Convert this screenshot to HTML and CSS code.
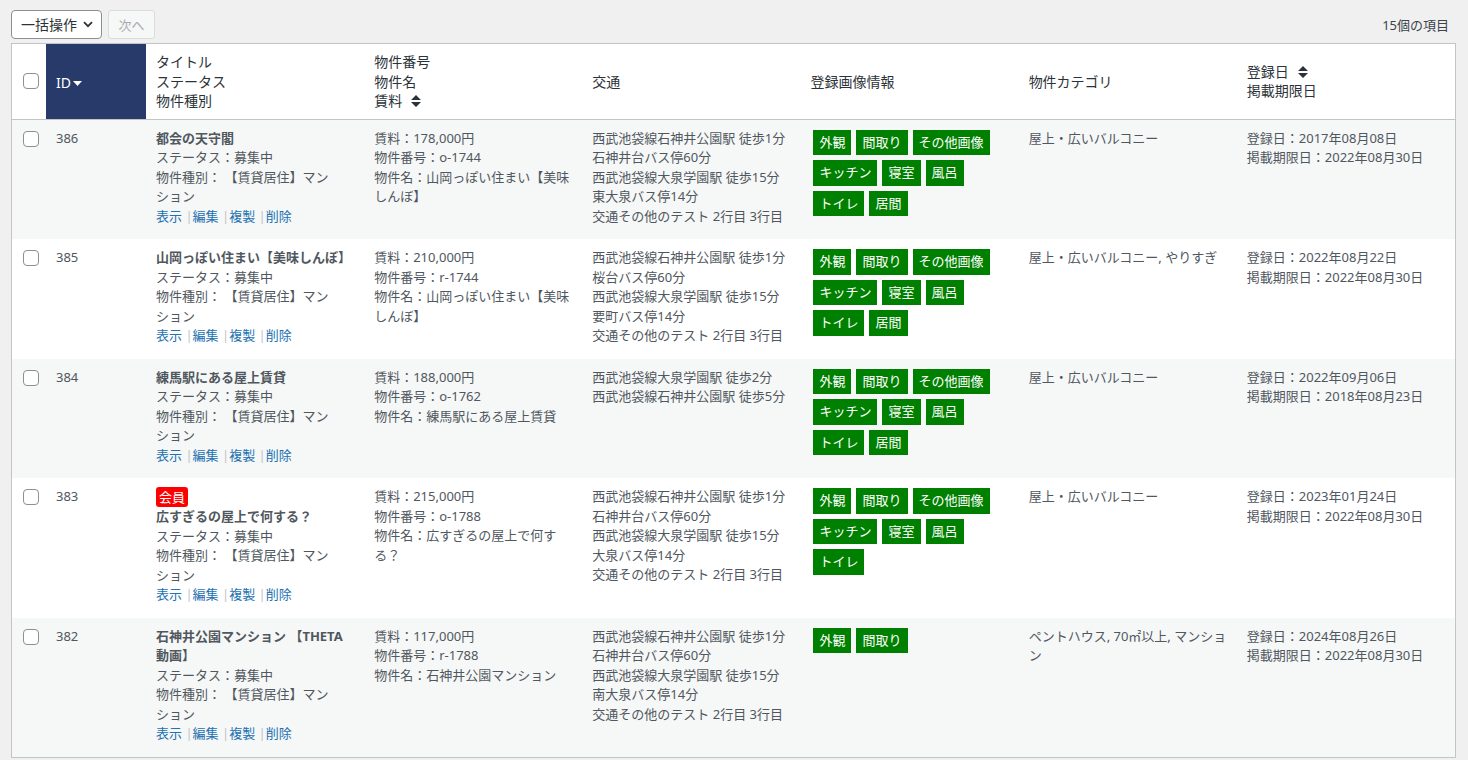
FILE: index.html
```html
<!DOCTYPE html>
<html lang="ja">
<head>
<meta charset="utf-8">
<title>物件一覧</title>
<link rel="stylesheet" href="styles.css">
</head>
<body>
<div class="wrap">
  <div class="tablenav">
    <div class="bulk">一括操作<svg class="chev" width="10" height="7" viewBox="0 0 10 7"><path d="M1 1.2 5 5.2 9 1.2" fill="none" stroke="#2c3338" stroke-width="1.8"/></svg></div>
    <div class="btn-disabled">次へ</div>
    <div class="count">15個の項目</div>
  </div>
  <table class="list">
    <colgroup>
      <col class="c-check"><col class="c-id"><col><col><col><col><col><col>
    </colgroup>
    <thead>
      <tr>
        <th class="check"><span class="cb"></span></th>
        <th class="id-head">ID<svg class="tri" width="9" height="5" viewBox="0 0 9 5"><path d="M0 0H9L4.5 5Z" fill="#fff"/></svg></th>
        <th>タイトル<br>ステータス<br>物件種別</th>
        <th>物件番号<br>物件名<br>賃料<svg class="sort" width="10" height="12" viewBox="0 0 10 12"><path d="M0 5 5 0 10 5Z M0 7 10 7 5 12Z" fill="#2c3338"/></svg></th>
        <th>交通</th>
        <th>登録画像情報</th>
        <th>物件カテゴリ</th>
        <th>登録日<svg class="sort" width="10" height="12" viewBox="0 0 10 12"><path d="M0 5 5 0 10 5Z M0 7 10 7 5 12Z" fill="#2c3338"/></svg><br>掲載期限日</th>
      </tr>
    </thead>
    <tbody>
      <tr class="alt">
        <td class="check"><span class="cb"></span></td>
        <td>386</td>
        <td><strong class="title">都会の天守閣</strong><br>ステータス：募集中<br>物件種別： 【賃貸居住】マンション<div class="actions"><a>表示</a> <span class="sep">|</span><a>編集</a> <span class="sep">|</span><a>複製</a> <span class="sep">|</span><a>削除</a></div></td>
        <td>賃料：178,000円<br>物件番号：o-1744<br>物件名：山岡っぽい住まい【美味しんぼ】</td>
        <td>西武池袋線石神井公園駅 徒歩1分<br>石神井台バス停60分<br>西武池袋線大泉学園駅 徒歩15分<br>東大泉バス停14分<br>交通その他のテスト 2行目 3行目</td>
        <td><div class="tags"><span class="tag">外観</span><span class="tag">間取り</span><span class="tag">その他画像</span><span class="tag">キッチン</span><span class="tag">寝室</span><span class="tag">風呂</span><span class="tag">トイレ</span><span class="tag">居間</span></div></td>
        <td>屋上・広いバルコニー</td>
        <td>登録日：2017年08月08日<br>掲載期限日：2022年08月30日</td>
      </tr>
      <tr>
        <td class="check"><span class="cb"></span></td>
        <td>385</td>
        <td><strong class="title">山岡っぽい住まい【美味しんぼ】</strong><br>ステータス：募集中<br>物件種別： 【賃貸居住】マンション<div class="actions"><a>表示</a> <span class="sep">|</span><a>編集</a> <span class="sep">|</span><a>複製</a> <span class="sep">|</span><a>削除</a></div></td>
        <td>賃料：210,000円<br>物件番号：r-1744<br>物件名：山岡っぽい住まい【美味しんぼ】</td>
        <td>西武池袋線石神井公園駅 徒歩1分<br>桜台バス停60分<br>西武池袋線大泉学園駅 徒歩15分<br>要町バス停14分<br>交通その他のテスト 2行目 3行目</td>
        <td><div class="tags"><span class="tag">外観</span><span class="tag">間取り</span><span class="tag">その他画像</span><span class="tag">キッチン</span><span class="tag">寝室</span><span class="tag">風呂</span><span class="tag">トイレ</span><span class="tag">居間</span></div></td>
        <td>屋上・広いバルコニー, やりすぎ</td>
        <td>登録日：2022年08月22日<br>掲載期限日：2022年08月30日</td>
      </tr>
      <tr class="alt">
        <td class="check"><span class="cb"></span></td>
        <td>384</td>
        <td><strong class="title">練馬駅にある屋上賃貸</strong><br>ステータス：募集中<br>物件種別： 【賃貸居住】マンション<div class="actions"><a>表示</a> <span class="sep">|</span><a>編集</a> <span class="sep">|</span><a>複製</a> <span class="sep">|</span><a>削除</a></div></td>
        <td>賃料：188,000円<br>物件番号：o-1762<br>物件名：練馬駅にある屋上賃貸</td>
        <td>西武池袋線大泉学園駅 徒歩2分<br>西武池袋線石神井公園駅 徒歩5分</td>
        <td><div class="tags"><span class="tag">外観</span><span class="tag">間取り</span><span class="tag">その他画像</span><span class="tag">キッチン</span><span class="tag">寝室</span><span class="tag">風呂</span><span class="tag">トイレ</span><span class="tag">居間</span></div></td>
        <td>屋上・広いバルコニー</td>
        <td>登録日：2022年09月06日<br>掲載期限日：2018年08月23日</td>
      </tr>
      <tr>
        <td class="check"><span class="cb"></span></td>
        <td>383</td>
        <td><span class="badge">会員</span><strong class="title">広すぎるの屋上で何する？</strong><br>ステータス：募集中<br>物件種別： 【賃貸居住】マンション<div class="actions"><a>表示</a> <span class="sep">|</span><a>編集</a> <span class="sep">|</span><a>複製</a> <span class="sep">|</span><a>削除</a></div></td>
        <td>賃料：215,000円<br>物件番号：o-1788<br>物件名：広すぎるの屋上で何する？</td>
        <td>西武池袋線石神井公園駅 徒歩1分<br>石神井台バス停60分<br>西武池袋線大泉学園駅 徒歩15分<br>大泉バス停14分<br>交通その他のテスト 2行目 3行目</td>
        <td><div class="tags"><span class="tag">外観</span><span class="tag">間取り</span><span class="tag">その他画像</span><span class="tag">キッチン</span><span class="tag">寝室</span><span class="tag">風呂</span><span class="tag">トイレ</span></div></td>
        <td>屋上・広いバルコニー</td>
        <td>登録日：2023年01月24日<br>掲載期限日：2022年08月30日</td>
      </tr>
      <tr class="alt">
        <td class="check"><span class="cb"></span></td>
        <td>382</td>
        <td><strong class="title">石神井公園マンション 【THETA動画】</strong><br>ステータス：募集中<br>物件種別： 【賃貸居住】マンション<div class="actions"><a>表示</a> <span class="sep">|</span><a>編集</a> <span class="sep">|</span><a>複製</a> <span class="sep">|</span><a>削除</a></div></td>
        <td>賃料：117,000円<br>物件番号：r-1788<br>物件名：石神井公園マンション</td>
        <td>西武池袋線石神井公園駅 徒歩1分<br>石神井台バス停60分<br>西武池袋線大泉学園駅 徒歩15分<br>南大泉バス停14分<br>交通その他のテスト 2行目 3行目</td>
        <td><div class="tags"><span class="tag">外観</span><span class="tag">間取り</span></div></td>
        <td>ペントハウス, 70㎡以上, マンション</td>
        <td>登録日：2024年08月26日<br>掲載期限日：2022年08月30日</td>
      </tr>
    </tbody>
  </table>
</div>
</body>
</html>
```
FILE: styles.css
```css
html, body {
  margin: 0;
  padding: 0;
}
body {
  background: #f0f0f1;
  font-family: "Noto Sans", "Noto Sans CJK JP", sans-serif;
  font-size: 13px;
  color: #3c434a;
}
.wrap {
  padding: 0 12px 0 11px;
}
.tablenav {
  display: flex;
  align-items: center;
  padding-top: 10px;
  margin-bottom: 4px;
  height: 29px;
}
.bulk {
  box-sizing: border-box;
  width: 91px;
  height: 29px;
  border: 1px solid #8c8f94;
  border-radius: 4px;
  background: #fff;
  font-size: 14px;
  color: #2c3338;
  display: flex;
  align-items: center;
  padding-left: 9px;
  line-height: 1;
}
.chev {
  margin-left: 6px;
}
.btn-disabled {
  box-sizing: border-box;
  height: 29px;
  width: 47px;
  margin-left: 6px;
  border: 1px solid #dcdcde;
  border-radius: 3px;
  background: #f6f7f7;
  color: #a7aaad;
  font-size: 13px;
  display: flex;
  align-items: center;
  justify-content: center;
}
.count {
  margin-left: auto;
  margin-right: 7px;
  font-size: 13px;
  color: #3c434a;
}
.list {
  width: 100%;
  table-layout: fixed;
  border-collapse: separate;
  border-spacing: 0;
  border: 1px solid #c3c4c7;
  background: #fff;
}
.c-check {
  width: 34px;
}
.c-id {
  width: 100px;
}
.list th {
  text-align: left;
  font-weight: 400;
  font-size: 14px;
  line-height: 19.6px;
  color: #2c3338;
  padding: 8px 10px;
  vertical-align: middle;
  border-bottom: 1px solid #c3c4c7;
}
.list th.check {
  padding: 0 0 0 3px;
}
.list th.id-head {
  background: #283a6a;
  color: #fff;
  padding-top: 10px;
}
.tri {
  margin-left: 2px;
  vertical-align: 2px;
}
.sort {
  margin-left: 9px;
  vertical-align: -1px;
}
.cb {
  display: block;
  box-sizing: border-box;
  width: 16px;
  height: 16px;
  margin-left: 8px;
  border: 1px solid #8c8f94;
  border-radius: 4px;
  background: #fff;
}
.list td {
  padding: 9px 10px 7px;
  line-height: 19.5px;
  vertical-align: top;
  color: #50575e;
  overflow-wrap: break-word;
  line-break: strict;
}
.list td.check {
  padding: 11px 0 0 3px;
}
.list tr.alt td {
  background: #f6f7f7;
}
.title {
  font-weight: 700;
  color: #50575e;
}
.actions {
  padding-bottom: 6px;
}
.actions a {
  color: #2271b1;
}
.sep {
  color: #c3c4c7;
}
.badge {
  display: block;
  width: fit-content;
  background: #ff0000;
  color: #fff;
  padding: 1px 3px;
  line-height: 18px;
  border-radius: 3px;
}
.tags {
  display: flex;
  flex-wrap: wrap;
  gap: 5px 5px;
  padding: 1px 0 0 3px;
}
.tag {
  background: #008000;
  color: #fff;
  padding: 3px 6px;
  line-height: 19.5px;
}
```
